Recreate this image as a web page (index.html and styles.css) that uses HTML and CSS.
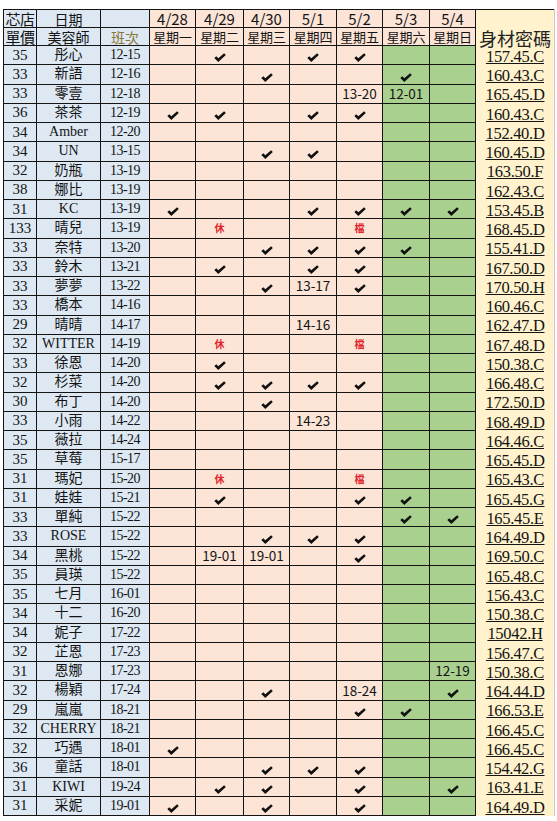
FILE: index.html
```html
<!DOCTYPE html>
<html lang="zh-Hant">
<head>
<meta charset="utf-8">
<title>班表</title>
<link rel="stylesheet" href="styles.css">
</head>
<body>
<svg class="defs" aria-hidden="true"><symbol id="ck" viewBox="0 0 12 9"><path d="M0.3 5.1 L2.3 3.3 L4.3 5.3 L10.1 0.2 L11.8 1.9 L4.3 8.9 Z"/></symbol></svg>
<table class="sheet">
<colgroup>
<col class="c1"><col class="c2"><col class="c3"><col class="c4"><col class="c5"><col class="c6"><col class="c7"><col class="c8"><col class="c9"><col class="c10"><col class="c11">
</colgroup>
<tr class="hr">
<td class="lab">芯店</td><td class="hb">日期</td><td class="hb"></td>
<td class="w hd">4/28</td><td class="w hd">4/29</td><td class="w hd">4/30</td><td class="w hd">5/1</td><td class="w hd">5/2</td><td class="w hd">5/3</td><td class="w hd">5/4</td>
<td class="c ctop"></td>
</tr>
<tr class="hr">
<td class="lab">單價</td><td class="hb">美容師</td><td class="hb gold">班次</td>
<td class="w hw">星期一</td><td class="w hw">星期二</td><td class="w hw">星期三</td><td class="w hw">星期四</td><td class="w hw">星期五</td><td class="w hw">星期六</td><td class="w hw">星期日</td>
<td class="c chead">身材密碼</td>
</tr>
<tr><td class="p">35</td><td class="n">彤心</td><td class="s">12-15</td><td class="w"></td><td class="w"><svg class="ck"><use href="#ck"/></svg></td><td class="w"></td><td class="w"><svg class="ck"><use href="#ck"/></svg></td><td class="w"><svg class="ck"><use href="#ck"/></svg></td><td class="g"></td><td class="g"></td><td class="c">157.45.C</td></tr>
<tr><td class="p">33</td><td class="n">新語</td><td class="s">12-16</td><td class="w"></td><td class="w"></td><td class="w"><svg class="ck"><use href="#ck"/></svg></td><td class="w"></td><td class="w"></td><td class="g"><svg class="ck"><use href="#ck"/></svg></td><td class="g"></td><td class="c">160.43.C</td></tr>
<tr><td class="p">33</td><td class="n">零壹</td><td class="s">12-18</td><td class="w"></td><td class="w"></td><td class="w"></td><td class="w"></td><td class="w t">13-20</td><td class="g t">12-01</td><td class="g"></td><td class="c">165.45.D</td></tr>
<tr><td class="p">36</td><td class="n">茶茶</td><td class="s">12-19</td><td class="w"><svg class="ck"><use href="#ck"/></svg></td><td class="w"><svg class="ck"><use href="#ck"/></svg></td><td class="w"></td><td class="w"><svg class="ck"><use href="#ck"/></svg></td><td class="w"><svg class="ck"><use href="#ck"/></svg></td><td class="g"></td><td class="g"></td><td class="c">160.43.C</td></tr>
<tr><td class="p">34</td><td class="n">Amber</td><td class="s">12-20</td><td class="w"></td><td class="w"></td><td class="w"></td><td class="w"></td><td class="w"></td><td class="g"></td><td class="g"></td><td class="c">152.40.D</td></tr>
<tr><td class="p">34</td><td class="n">UN</td><td class="s">13-15</td><td class="w"></td><td class="w"></td><td class="w"><svg class="ck"><use href="#ck"/></svg></td><td class="w"><svg class="ck"><use href="#ck"/></svg></td><td class="w"></td><td class="g"></td><td class="g"></td><td class="c">160.45.D</td></tr>
<tr><td class="p">32</td><td class="n">奶瓶</td><td class="s">13-19</td><td class="w"></td><td class="w"></td><td class="w"></td><td class="w"></td><td class="w"></td><td class="g"></td><td class="g"></td><td class="c">163.50.F</td></tr>
<tr><td class="p">38</td><td class="n">娜比</td><td class="s">13-19</td><td class="w"></td><td class="w"></td><td class="w"></td><td class="w"></td><td class="w"></td><td class="g"></td><td class="g"></td><td class="c">162.43.C</td></tr>
<tr><td class="p">31</td><td class="n">KC</td><td class="s">13-19</td><td class="w"><svg class="ck"><use href="#ck"/></svg></td><td class="w"></td><td class="w"></td><td class="w"><svg class="ck"><use href="#ck"/></svg></td><td class="w"><svg class="ck"><use href="#ck"/></svg></td><td class="g"><svg class="ck"><use href="#ck"/></svg></td><td class="g"><svg class="ck"><use href="#ck"/></svg></td><td class="c">153.45.B</td></tr>
<tr><td class="p">133</td><td class="n">晴兒</td><td class="s">13-19</td><td class="w"></td><td class="w off">休</td><td class="w"></td><td class="w"></td><td class="w off">檔</td><td class="g"></td><td class="g"></td><td class="c">168.45.D</td></tr>
<tr><td class="p">33</td><td class="n">奈特</td><td class="s">13-20</td><td class="w"></td><td class="w"></td><td class="w"><svg class="ck"><use href="#ck"/></svg></td><td class="w"><svg class="ck"><use href="#ck"/></svg></td><td class="w"><svg class="ck"><use href="#ck"/></svg></td><td class="g"><svg class="ck"><use href="#ck"/></svg></td><td class="g"></td><td class="c">155.41.D</td></tr>
<tr><td class="p">33</td><td class="n">鈴木</td><td class="s">13-21</td><td class="w"></td><td class="w"><svg class="ck"><use href="#ck"/></svg></td><td class="w"></td><td class="w"><svg class="ck"><use href="#ck"/></svg></td><td class="w"><svg class="ck"><use href="#ck"/></svg></td><td class="g"></td><td class="g"></td><td class="c">167.50.D</td></tr>
<tr><td class="p">33</td><td class="n">夢夢</td><td class="s">13-22</td><td class="w"></td><td class="w"></td><td class="w"><svg class="ck"><use href="#ck"/></svg></td><td class="w t">13-17</td><td class="w"><svg class="ck"><use href="#ck"/></svg></td><td class="g"></td><td class="g"></td><td class="c">170.50.H</td></tr>
<tr><td class="p">33</td><td class="n">橋本</td><td class="s">14-16</td><td class="w"></td><td class="w"></td><td class="w"></td><td class="w"></td><td class="w"></td><td class="g"></td><td class="g"></td><td class="c">160.46.C</td></tr>
<tr><td class="p">29</td><td class="n">晴晴</td><td class="s">14-17</td><td class="w"></td><td class="w"></td><td class="w"></td><td class="w t">14-16</td><td class="w"></td><td class="g"></td><td class="g"></td><td class="c">162.47.D</td></tr>
<tr><td class="p">32</td><td class="n">WITTER</td><td class="s">14-19</td><td class="w"></td><td class="w off">休</td><td class="w"></td><td class="w"></td><td class="w off">檔</td><td class="g"></td><td class="g"></td><td class="c">167.48.D</td></tr>
<tr><td class="p">33</td><td class="n">徐恩</td><td class="s">14-20</td><td class="w"></td><td class="w"><svg class="ck"><use href="#ck"/></svg></td><td class="w"></td><td class="w"></td><td class="w"></td><td class="g"></td><td class="g"></td><td class="c">150.38.C</td></tr>
<tr><td class="p">32</td><td class="n">杉菜</td><td class="s">14-20</td><td class="w"></td><td class="w"><svg class="ck"><use href="#ck"/></svg></td><td class="w"><svg class="ck"><use href="#ck"/></svg></td><td class="w"><svg class="ck"><use href="#ck"/></svg></td><td class="w"><svg class="ck"><use href="#ck"/></svg></td><td class="g"></td><td class="g"></td><td class="c">166.48.C</td></tr>
<tr><td class="p">30</td><td class="n">布丁</td><td class="s">14-20</td><td class="w"></td><td class="w"></td><td class="w"><svg class="ck"><use href="#ck"/></svg></td><td class="w"></td><td class="w"></td><td class="g"></td><td class="g"></td><td class="c">172.50.D</td></tr>
<tr><td class="p">33</td><td class="n">小雨</td><td class="s">14-22</td><td class="w"></td><td class="w"></td><td class="w"></td><td class="w t">14-23</td><td class="w"></td><td class="g"></td><td class="g"></td><td class="c">168.49.D</td></tr>
<tr><td class="p">35</td><td class="n">薇拉</td><td class="s">14-24</td><td class="w"></td><td class="w"></td><td class="w"></td><td class="w"></td><td class="w"></td><td class="g"></td><td class="g"></td><td class="c">164.46.C</td></tr>
<tr><td class="p">35</td><td class="n">草莓</td><td class="s">15-17</td><td class="w"></td><td class="w"></td><td class="w"></td><td class="w"></td><td class="w"></td><td class="g"></td><td class="g"></td><td class="c">165.45.D</td></tr>
<tr><td class="p">31</td><td class="n">瑪妃</td><td class="s">15-20</td><td class="w"></td><td class="w off">休</td><td class="w"></td><td class="w"></td><td class="w off">檔</td><td class="g"></td><td class="g"></td><td class="c">165.43.C</td></tr>
<tr><td class="p">31</td><td class="n">娃娃</td><td class="s">15-21</td><td class="w"></td><td class="w"><svg class="ck"><use href="#ck"/></svg></td><td class="w"></td><td class="w"></td><td class="w"><svg class="ck"><use href="#ck"/></svg></td><td class="g"><svg class="ck"><use href="#ck"/></svg></td><td class="g"></td><td class="c">165.45.G</td></tr>
<tr><td class="p">33</td><td class="n">單純</td><td class="s">15-22</td><td class="w"></td><td class="w"></td><td class="w"></td><td class="w"></td><td class="w"></td><td class="g"><svg class="ck"><use href="#ck"/></svg></td><td class="g"><svg class="ck"><use href="#ck"/></svg></td><td class="c">165.45.E</td></tr>
<tr><td class="p">33</td><td class="n">ROSE</td><td class="s">15-22</td><td class="w"></td><td class="w"></td><td class="w"><svg class="ck"><use href="#ck"/></svg></td><td class="w"><svg class="ck"><use href="#ck"/></svg></td><td class="w"><svg class="ck"><use href="#ck"/></svg></td><td class="g"></td><td class="g"></td><td class="c">164.49.D</td></tr>
<tr><td class="p">34</td><td class="n">黑桃</td><td class="s">15-22</td><td class="w"></td><td class="w t">19-01</td><td class="w t">19-01</td><td class="w"></td><td class="w"><svg class="ck"><use href="#ck"/></svg></td><td class="g"></td><td class="g"></td><td class="c">169.50.C</td></tr>
<tr><td class="p">35</td><td class="n">員瑛</td><td class="s">15-22</td><td class="w"></td><td class="w"></td><td class="w"></td><td class="w"></td><td class="w"></td><td class="g"></td><td class="g"></td><td class="c">165.48.C</td></tr>
<tr><td class="p">35</td><td class="n">七月</td><td class="s">16-01</td><td class="w"></td><td class="w"></td><td class="w"></td><td class="w"></td><td class="w"></td><td class="g"></td><td class="g"></td><td class="c">156.43.C</td></tr>
<tr><td class="p">34</td><td class="n">十二</td><td class="s">16-20</td><td class="w"></td><td class="w"></td><td class="w"></td><td class="w"></td><td class="w"></td><td class="g"></td><td class="g"></td><td class="c">150.38.C</td></tr>
<tr><td class="p">34</td><td class="n">妮子</td><td class="s">17-22</td><td class="w"></td><td class="w"></td><td class="w"></td><td class="w"></td><td class="w"></td><td class="g"></td><td class="g"></td><td class="c">15042.H</td></tr>
<tr><td class="p">32</td><td class="n">芷恩</td><td class="s">17-23</td><td class="w"></td><td class="w"></td><td class="w"></td><td class="w"></td><td class="w"></td><td class="g"></td><td class="g"></td><td class="c">156.47.C</td></tr>
<tr><td class="p">31</td><td class="n">恩娜</td><td class="s">17-23</td><td class="w"></td><td class="w"></td><td class="w"></td><td class="w"></td><td class="w"></td><td class="g"></td><td class="g t">12-19</td><td class="c">150.38.C</td></tr>
<tr><td class="p">32</td><td class="n">楊穎</td><td class="s">17-24</td><td class="w"></td><td class="w"></td><td class="w"><svg class="ck"><use href="#ck"/></svg></td><td class="w"></td><td class="w t">18-24</td><td class="g"></td><td class="g"><svg class="ck"><use href="#ck"/></svg></td><td class="c">164.44.D</td></tr>
<tr><td class="p">29</td><td class="n">嵐嵐</td><td class="s">18-21</td><td class="w"></td><td class="w"></td><td class="w"></td><td class="w"></td><td class="w"><svg class="ck"><use href="#ck"/></svg></td><td class="g"><svg class="ck"><use href="#ck"/></svg></td><td class="g"></td><td class="c">166.53.E</td></tr>
<tr><td class="p">32</td><td class="n">CHERRY</td><td class="s">18-21</td><td class="w"></td><td class="w"></td><td class="w"></td><td class="w"></td><td class="w"></td><td class="g"></td><td class="g"></td><td class="c">166.45.C</td></tr>
<tr><td class="p">32</td><td class="n">巧遇</td><td class="s">18-01</td><td class="w"><svg class="ck"><use href="#ck"/></svg></td><td class="w"></td><td class="w"></td><td class="w"></td><td class="w"></td><td class="g"></td><td class="g"></td><td class="c">166.45.C</td></tr>
<tr><td class="p">36</td><td class="n">童話</td><td class="s">18-01</td><td class="w"></td><td class="w"></td><td class="w"><svg class="ck"><use href="#ck"/></svg></td><td class="w"><svg class="ck"><use href="#ck"/></svg></td><td class="w"><svg class="ck"><use href="#ck"/></svg></td><td class="g"></td><td class="g"></td><td class="c">154.42.G</td></tr>
<tr><td class="p">31</td><td class="n">KIWI</td><td class="s">19-24</td><td class="w"></td><td class="w"><svg class="ck"><use href="#ck"/></svg></td><td class="w"><svg class="ck"><use href="#ck"/></svg></td><td class="w"></td><td class="w"><svg class="ck"><use href="#ck"/></svg></td><td class="g"></td><td class="g"><svg class="ck"><use href="#ck"/></svg></td><td class="c">163.41.E</td></tr>
<tr><td class="p">31</td><td class="n">采妮</td><td class="s">19-01</td><td class="w"><svg class="ck"><use href="#ck"/></svg></td><td class="w"></td><td class="w"><svg class="ck"><use href="#ck"/></svg></td><td class="w"></td><td class="w"><svg class="ck"><use href="#ck"/></svg></td><td class="g"></td><td class="g"></td><td class="c">164.49.D</td></tr>
</table>
</body>
</html>
```

FILE: styles.css
```css
html, body {
  margin: 0;
  padding: 0;
  background: #ffffff;
}

.defs {
  display: block;
  width: 0;
  height: 0;
  overflow: hidden;
}

.sheet {
  margin: 9px 0 0 3px;
  border-collapse: collapse;
  table-layout: fixed;
  width: 551px;
}

.c1 { width: 33px; }
.c2 { width: 64px; }
.c3 { width: 49px; }
.c4 { width: 46px; }
.c5 { width: 48px; }
.c6 { width: 46px; }
.c7 { width: 47px; }
.c8 { width: 46px; }
.c9 { width: 47px; }
.c10 { width: 46px; }
.c11 { width: 79px; }

.sheet tr {
  height: 19.25px;
}

.sheet tr.hr {
  height: 18px;
}

.sheet td {
  border: 1px solid #141414;
  padding: 0;
  text-align: center;
  vertical-align: middle;
  line-height: 1;
  white-space: nowrap;
  overflow: hidden;
  color: #141414;
  font-family: "Noto Sans CJK TC", "Noto Sans", sans-serif;
}

.sheet tr.hr td {
  overflow: visible;
  line-height: 16px;
}

/* first three columns */
.lab, .p, .n, .s, .hb {
  background: #dde8f3;
}

.lab {
  color: #c0141c;
  font-size: 15px;
  letter-spacing: -0.5px;
}

.p {
  color: #c0141c;
  font-size: 15px;
}

.s {
  color: #8a7633;
  font-size: 14px;
  letter-spacing: -0.5px;
}

.sheet td.p,
.sheet td.s {
  font-family: "Liberation Serif", serif;
}

.sheet td.n {
  font-family: "Liberation Serif", "Noto Sans CJK TC", serif;
  font-size: 14px;
}

.hb {
  font-size: 14px;
}

.sheet td.gold {
  color: #8a7633;
}

/* day columns */
.w {
  background: #fce4d7;
}

.g {
  background: #a9d08e;
}

.hd {
  font-size: 15px;
}

.hw {
  font-size: 13px;
  letter-spacing: -0.2px;
}

.t {
  font-size: 13.5px;
}

.sheet td.off {
  color: #e1252b;
  font-size: 10px;
  font-weight: 700;
}

.ck {
  display: inline-block;
  width: 12px;
  height: 9px;
  vertical-align: middle;
  fill: #111111;
}

/* size code column */
.sheet td.c {
  background: #fff2cc;
  border-top: none;
  border-bottom: none;
  border-right: 1px solid #c9c9c9;
  font-family: "Liberation Serif", serif;
  font-size: 16.5px;
  letter-spacing: -0.3px;
  text-decoration: underline;
  text-decoration-thickness: 1px;
  text-underline-offset: 1px;
  vertical-align: bottom;
  line-height: 17px;
}

.sheet td.ctop {
  border-top: 1px solid #141414;
}

.sheet td.chead {
  font-family: "Noto Sans CJK TC", sans-serif;
  font-size: 18px;
  text-decoration: none;
  letter-spacing: 0;
  line-height: 18px;
  color: #222222;
}
```
